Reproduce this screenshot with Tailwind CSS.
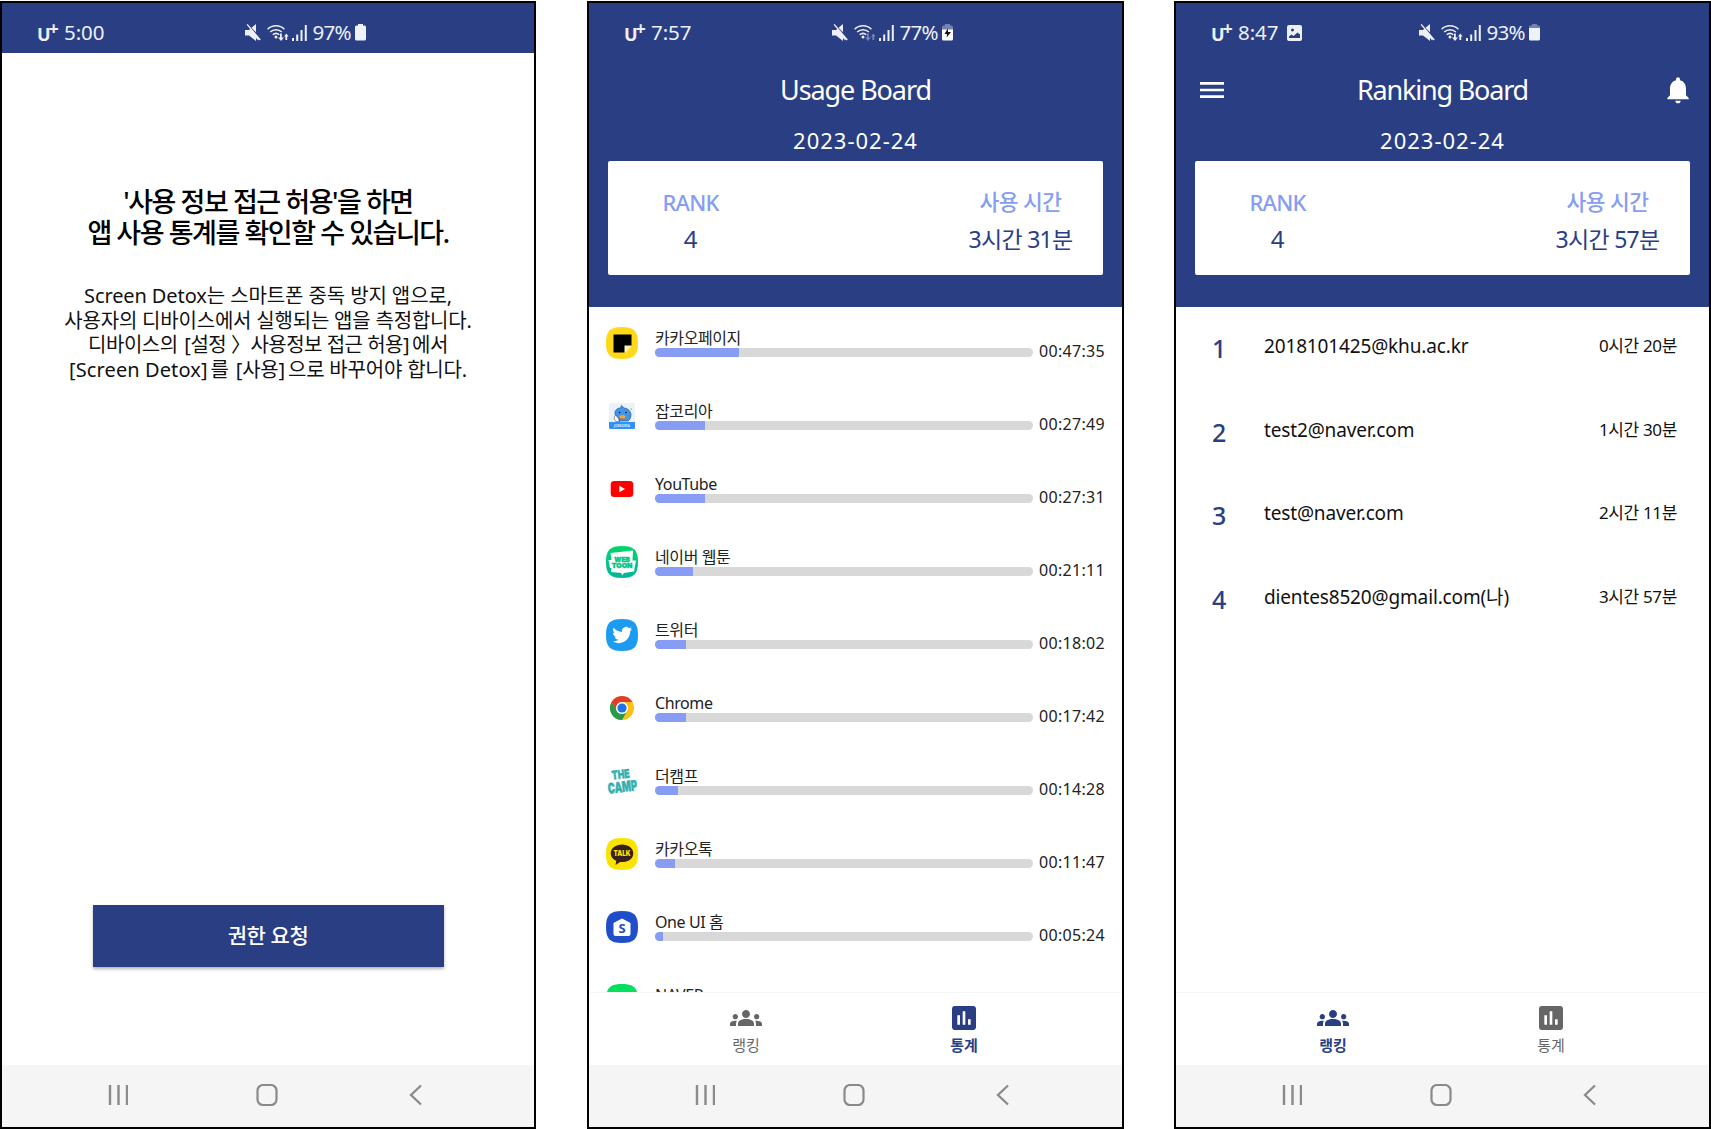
<!DOCTYPE html>
<html lang="ko">
<head>
<meta charset="utf-8">
<title>Screen Detox</title>
<script src="https://cdn.jsdelivr.net/npm/@tailwindcss/browser@4"></script>
</head>
<body class="w-[1711px] h-[1129px] overflow-hidden bg-white pt-px flex font-['Noto_Sans','Noto_Sans_CJK_KR',sans-serif] text-[#111]">

<svg class="hidden">
  <symbol id="mute" viewBox="0 0 16 17"><path fill="currentColor" d="M0 6h4l1.200-1L14 15.300l-1 1L11 14v3L4 11.500H0zM11 0v8.300L6.500 3.800zM1.600.8 2.700 0 15.800 15.500l-1.100 1z"/></symbol>
  <symbol id="wifi" viewBox="0 0 22 17"><g fill="none" stroke="currentColor" stroke-width="1.500"><path d="M.6 5.200a12 12 0 0 1 16.800 0M3.200 8a8.400 8.400 0 0 1 11.600 0M5.700 10.800a5 5 0 0 1 6.600 0"/></g><circle cx="9" cy="13" r="1.500" fill="currentColor"/></symbol>
  <symbol id="arrows" viewBox="0 0 22 17"><path fill="currentColor" d="M13 9.500h1.800v4H17L14 17l-3-3.500h2zM18.400 16v-3.500H17L19.300 9.500 21.600 12.500h-1.400V16z"/></symbol>
  <symbol id="signal" viewBox="0 0 15 16"><path fill="currentColor" d="M0 13h2v3H0zM4.200 9.500h2V16h-2zM8.500 5h2v11h-2zM12.800 0h2v16h-2z"/></symbol>
  <symbol id="groups" viewBox="0 0 24 24"><path fill="currentColor" d="M12 12.750c1.630 0 3.070.39 4.240.9 1.080.48 1.760 1.560 1.760 2.730V18H6v-1.610c0-1.180.68-2.260 1.760-2.730 1.170-.52 2.610-.91 4.240-.91zM4 13c1.100 0 2-.9 2-2s-.9-2-2-2-2 .9-2 2 .9 2 2 2zm1.130 1.100c-.37-.06-.74-.1-1.130-.1-.99 0-1.930.21-2.780.58C.48 14.900 0 15.620 0 16.430V18h4.500v-1.610c0-.83.23-1.610.63-2.290zM20 13c1.100 0 2-.9 2-2s-.9-2-2-2-2 .9-2 2 .9 2 2 2zm4 3.430c0-.81-.48-1.530-1.220-1.850-.85-.37-1.790-.58-2.780-.58-.39 0-.76.04-1.130.1.400.68.63 1.460.63 2.290V18H24v-1.570zM12 6c1.660 0 3 1.340 3 3s-1.340 3-3 3-3-1.340-3-3 1.340-3 3-3z"/></symbol>
  <symbol id="stats" viewBox="0 0 24 24"><path fill="currentColor" d="M19 3H5c-1.100 0-2 .9-2 2v14c0 1.100.9 2 2 2h14c1.100 0 2-.9 2-2V5c0-1.100-.9-2-2-2zM9 17H7v-7h2v7zm4 0h-2V7h2v10zm4 0h-2v-4h2v4z"/></symbol>
  <symbol id="squircle" viewBox="0 0 32 32"><path fill="currentColor" d="M16 0C28 0 32 4 32 16S28 32 16 32 0 28 0 16 4 0 16 0Z"/></symbol>
</svg>

<!-- Permission screen -->
<section class="w-[536px] h-[1128px] shrink-0 border-2 border-black flex flex-col bg-white">
  <div class="h-[50px] bg-[#2a3e84]" data-status="5:00|97%|full"></div>
  <div class="flex-1 flex flex-col items-center">
    <h1 class="mt-[133px] text-center font-medium text-[27px] leading-[31px] tracking-[-1.450px] text-black whitespace-nowrap">'사용 정보 접근 허용'을 하면<br>앱 사용 통계를 확인할 수 있습니다.</h1>
    <p class="mt-[36px] text-center text-[20px] leading-[24.700px] whitespace-nowrap"><span class="tracking-[-0.1px]">Screen Detox는 스마트폰 중독 방지 앱으로,</span><br><span class="tracking-[-0.2px]">사용자의 디바이스에서 실행되는 앱을 측정합니다.</span><br><span class="tracking-[-0.5px]">디바이스의 <span class="ml-[2px]">[설정 〉사용정보 접근 허용]</span><span class="ml-[3px]">에서</span></span><br><span class="tracking-[-0.2px]"><span class="tracking-[0.1px]">[Screen Detox]</span><span class="ml-[3px]">를</span> <span class="ml-[2px]">[사용]</span><span class="ml-[3px]">으로</span> 바꾸어야 합니다.</span></p>
    <button class="mt-auto mb-[98px] w-[351px] h-[62px] bg-[#2a3e84] text-white text-[21px] font-medium tracking-[-0.4px] shadow-[0_2px_3px_rgba(0,0,0,.3)]">권한 요청</button>
  </div>
  <div class="h-[62px] bg-[#f5f5f5]" data-sysnav></div>
</section>

<!-- Usage board -->
<section class="ml-[51px] w-[537px] h-[1128px] shrink-0 border-2 border-black flex flex-col bg-white">
  <header class="h-[304px] bg-[#2a3e84] text-white flex flex-col items-center">
    <div class="h-[50px] w-full" data-status="7:57|77%|charge"></div>
    <h2 class="mt-[17px] text-[27px] leading-[40px] tracking-[-1.100px]">Usage Board</h2>
    <div class="mt-[15px] text-[22px] leading-[30px] tracking-[1px]">2023-02-24</div>
    <div class="mt-[6px] w-[495px] h-[114px] rounded-[2px] bg-white flex justify-between pt-[24px]" data-card="3시간 31분"></div>
  </header>
  <ul id="usage" class="h-[685px] overflow-hidden"></ul>
  <div class="h-[73px] border-t border-[#f7f7f7]" data-tabs="1"></div>
  <div class="h-[62px] bg-[#f5f5f5]" data-sysnav></div>
</section>

<!-- Ranking board -->
<section class="ml-[50px] w-[537px] h-[1128px] shrink-0 border-2 border-black flex flex-col bg-white">
  <header class="h-[304px] bg-[#2a3e84] text-white flex flex-col items-center">
    <div class="h-[50px] w-full" data-status="8:47|93%|high|photo"></div>
    <div class="mt-[17px] w-full h-[40px] px-[15px] grid grid-cols-[1fr_auto_1fr] items-center">
      <svg class="size-8 ml-[5px]" viewBox="0 0 24 24"><path fill="#fff" d="M3 18h18v-2H3v2zm0-5h18v-2H3v2zm0-7v2h18V6H3z"/></svg>
      <h2 class="text-[27px] leading-[40px] tracking-[-1.200px]">Ranking Board</h2>
      <svg class="size-8 justify-self-end" viewBox="0 0 24 24"><path fill="#fff" d="M12 22c1.100 0 2-.9 2-2h-4c0 1.100.89 2 2 2zm6-6v-5c0-3.070-1.640-5.640-4.500-6.320V4c0-.83-.67-1.500-1.500-1.500s-1.500.67-1.500 1.500v.68C7.630 5.360 6 7.920 6 11v5l-2 2v1h16v-1l-2-2z"/></svg>
    </div>
    <div class="mt-[15px] text-[22px] leading-[30px] tracking-[1px]">2023-02-24</div>
    <div class="mt-[6px] w-[495px] h-[114px] rounded-[2px] bg-white flex justify-between pt-[24px]" data-card="3시간 57분"></div>
  </header>
  <ol id="ranking" class="h-[685px]"></ol>
  <div class="h-[73px] border-t border-[#f7f7f7]" data-tabs="0"></div>
  <div class="h-[62px] bg-[#f5f5f5]" data-sysnav></div>
</section>

<script>
const all = (s, f) => document.querySelectorAll(s).forEach(f);

const battery = {
  full: `<path fill="#f0f2fa" d="M3 0h5v1.500h1.500Q11 1.500 11 3v12q0 1.500-1.500 1.500h-8Q0 16.500 0 15V3Q0 1.500 1.500 1.500H3z"/>`,
  high: `<path fill="#7482b3" d="M3 0h5v1.500h1.500Q11 1.500 11 3v2H0V3Q0 1.500 1.500 1.500H3z"/><path fill="#f0f2fa" d="M0 4h11v11q0 1.500-1.500 1.500h-8Q0 16.500 0 15z"/>`,
  charge: `<path fill="#7482b3" d="M3 0h5v1.500h1.500Q11 1.500 11 3v3H0V3Q0 1.500 1.500 1.500H3z"/><path fill="#fff" d="M0 5.500h11V15q0 1.500-1.500 1.500h-8Q0 16.500 0 15z"/><path fill="#111" d="M5.800 4.500 6 8h3L4.600 13.500 5 10H2.500z"/>`
};

all('[data-status]', el => {
  const [time, pct, bat, photo] = el.dataset.status.split('|');
  el.innerHTML = `
  <div class="h-full pl-[35px] pt-[12px] pb-[3px] flex text-[#eef0f8] leading-[35px] text-[20.500px]">
    <div class="w-[27px] flex"><span class="text-[18px] font-bold leading-[38px]">U</span><span class="text-[18px] font-bold leading-[27px] -ml-[2px]">+</span></div>
    <div class="w-[180.500px] flex items-center tracking-[-0.1px]"><span>${time}</span>${photo ? `<svg class="ml-[9px] w-[15px] h-[16px]" viewBox="0 0 15 16"><path fill="currentColor" fill-rule="evenodd" d="M2 0h11q2 0 2 2v12q0 2-2 2H2q-2 0-2-2V2q0-2 2-2zm0 13h11V9.500L10.500 7.500 6.500 11 4.500 9.500 2 11.500zM5.500 3.500a1.500 1.500 0 1 0 .01 0z"/></svg>` : ''}</div>
    <div class="flex items-center">
      <svg class="w-4 h-[17px]"><use href="#mute"/></svg>
      <svg class="ml-[6px] w-[22px] h-[17px]" viewBox="0 0 22 17"><use href="#wifi"/><use href="#arrows" opacity="${bat === 'charge' ? .4 : 1}"/></svg>
      <svg class="ml-[3px] w-[15px] h-4"><use href="#signal"/></svg>
      <span class="ml-[6px] w-[40px] tracking-[-0.700px]">${pct}</span>
      <svg class="ml-[2px] w-[11px] h-[17px]" viewBox="0 0 11 17">${battery[bat]}</svg>
    </div>
  </div>`;
});

all('[data-sysnav]', el => el.innerHTML = `
  <div class="h-full pb-[3px] flex items-center text-[#8a8a8a]">
    <svg class="ml-[106px] w-[20px] h-[22px]" viewBox="0 0 20 22" fill="none" stroke="currentColor" stroke-width="2.400"><path d="M2 1v20M10.500 1v20M19 1v20"/></svg>
    <svg class="ml-[128px] w-[22px] h-[22px]" viewBox="0 0 22 22" fill="none" stroke="currentColor" stroke-width="2.200"><rect x="1.500" y="1" width="19" height="20" rx="5.500"/></svg>
    <svg class="ml-[131px] w-[13px] h-[22px]" viewBox="0 0 13 22" fill="none" stroke="currentColor" stroke-width="2.300"><path d="M12 1.500 2 11l10 9.500"/></svg>
  </div>`);

all('[data-card]', el => el.innerHTML = `
  <div class="w-[165px] flex flex-col items-center">
    <div class="text-[22px] leading-[34px] font-medium tracking-[-0.800px] text-[#859df2]">RANK</div>
    <div class="mt-[2px] text-[24px] leading-[36px] text-[#2a3e84]">4</div>
  </div>
  <div class="w-[165px] flex flex-col items-center whitespace-nowrap">
    <div class="text-[21.500px] leading-[34px] font-medium tracking-[-0.500px] text-[#859df2]">사용 시간</div>
    <div class="mt-[2px] text-[23px] leading-[36px] tracking-[-0.700px] text-[#2a3e84]">${el.dataset.card}</div>
  </div>`);

all('[data-tabs]', el => {
  const tab = (i, icon, label) => `
    <div class="w-[218px] flex flex-col items-center ${+el.dataset.tabs === i ? 'text-[#2a3e84] font-bold' : 'text-[#666]'}">
      <svg class="size-8"><use href="#${icon}"/></svg>
      <div class="text-[15px] leading-[22px] tracking-[-0.1px]">${label}</div>
    </div>`;
  el.innerHTML = `<div class="h-full pl-[48px] pt-[9px] flex">${tab(0, 'groups', '랭킹')}${tab(1, 'stats', '통계')}</div>`;
});

const bg = c => `<use href="#squircle" color="${c}"/>`;
const apps = [
  ['카카오페이지', '00:47:35', 83.5, bg('#ffd918') + `<path d="M7.500 7.500h18v11l-7 7h-11z"/><path fill="#fff3b8" d="M25.500 18.500v1l-6 6h-1v-7z"/>`],
  ['잡코리아', '00:27:49', 49.5, `<rect x="3" y="3" width="26" height="26" rx="1.500" fill="#e9f1fd"/><path fill="#fff" stroke="#334" stroke-width=".5" d="M10 21.500c-3-2-2-7 1.500-7.500l2 7.500z"/><path fill="#3d97f0" stroke="#246" stroke-width=".6" d="M9 14c-.5-4 2.500-6 5.500-6l1-2.500L18 8c4.500.5 7 3.500 7 7 0 3-1.500 5-3 6H13c1.500-3-3-4-4-7z"/><path fill="#f6a63a" stroke="#a60" stroke-width=".3" d="M13 16q3.500-2.500 7 0l-1 2.500h-5z"/><circle cx="13.500" cy="12.500" r=".8"/><circle cx="20" cy="12.500" r=".8"/><path fill="#f8c84a" d="M24.500 8h1.500v2h-1.500z"/><path fill="#3490f7" d="M3 22h26v5.500q0 1.500-1.500 1.500h-23Q3 29 3 27.500z"/><text x="8" y="27" font-size="4" font-weight="700" textLength="16" lengthAdjust="spacingAndGlyphs" fill="#d5e8ff">JOBKOREA</text>`],
  ['YouTube', '00:27:31', 49.5, `<rect x="4.700" y="8" width="22.600" height="16" rx="3.500" fill="#f00"/><path fill="#fff" d="M13.300 12.700v6.600l5.700-3.300z"/>`],
  ['네이버 웹툰', '00:21:11', 38, `<defs><linearGradient id="wt" x1="0" y1="0" x2="0" y2="1"><stop stop-color="#00d66b"/><stop offset="1" stop-color="#00b59b"/></linearGradient></defs><path fill="url(#wt)" d="M16 0C28 0 32 4 32 16S28 32 16 32 0 28 0 16 4 0 16 0Z"/><path fill="#fff" d="M4.500 7 27 4.500l-.5 10H30l-2 11-10 1.500-2 2.500-.5-2.500L5 26l.5-4H4L2.500 14h3z"/><g fill="#00c583" stroke="#00c583" stroke-width=".4" font-weight="900" font-family="Inter" font-size="6.600"><text x="8.300" y="15.700" textLength="15.500" lengthAdjust="spacingAndGlyphs">WEB</text><text x="5.800" y="22.200" textLength="20.500" lengthAdjust="spacingAndGlyphs">TOON</text></g>`],
  ['트위터', '00:18:02', 31, bg('#1d9bf0') + `<g transform="translate(6.300 6.100) scale(.83)"><path fill="#fff" d="M23.953 4.570a10 10 0 01-2.825.775 4.958 4.958 0 002.163-2.723c-.951.555-2.005.959-3.127 1.184a4.920 4.920 0 00-8.384 4.482C7.690 8.095 4.067 6.130 1.640 3.162a4.822 4.822 0 00-.666 2.475c0 1.710.870 3.213 2.188 4.096a4.904 4.904 0 01-2.228-.616v.06a4.923 4.923 0 003.946 4.827 4.996 4.996 0 01-2.212.085 4.936 4.936 0 004.604 3.417 9.867 9.867 0 01-6.102 2.105c-.390 0-.779-.023-1.170-.067a13.995 13.995 0 007.557 2.209c9.053 0 13.998-7.496 13.998-13.985 0-.210 0-.420-.015-.630A9.935 9.935 0 0024 4.590z"/></g>`],
  ['Chrome', '00:17:42', 31, `<circle cx="16" cy="16" r="12" fill="#fbc116"/><path fill="#e33b2e" d="M5.600 10A12 12 0 0 1 26.400 10H16a6 6 0 0 0-5.200 9z"/><path fill="#249a4b" d="M5.600 10 10.800 19A6 6 0 0 0 21.200 19L16 28A12 12 0 0 1 5.600 10z"/><circle cx="16" cy="16" r="6" fill="#fff"/><circle cx="16" cy="16" r="4.600" fill="#1a73e8"/>`],
  ['더캠프', '00:14:28', 23, `<g fill="#35b0b0" stroke="#35b0b0" stroke-width=".5" font-family="Inter" font-weight="900" transform="rotate(-7 16 16)"><text x="6.500" y="13.500" font-size="12" textLength="18" lengthAdjust="spacingAndGlyphs">THE</text><text x="1" y="27" font-size="14.500" textLength="29.500" lengthAdjust="spacingAndGlyphs">CAMP</text></g>`],
  ['카카오톡', '00:11:47', 19.5, bg('#fbe300') + `<path fill="#3b1e1e" d="M16 6.500c6.300 0 11.300 3.800 11.300 8.900S22.300 24 16 24l-1.800-.1L9.500 27l.7-4.200C6.800 21.300 4.700 18.500 4.700 15.400c0-5.100 5-8.900 11.300-8.900z"/><text x="7.500" y="18" font-size="7.500" font-weight="900" font-family="Inter" fill="#fbe300" textLength="17" lengthAdjust="spacingAndGlyphs">TALK</text>`],
  ['One UI 홈', '00:05:24', 8, bg('#1f4ec8') + `<path fill="#fff" d="M16 7.500 24.500 12v11q0 2-2 2h-13q-2 0-2-2V12z"/><text x="16" y="21.500" text-anchor="middle" font-size="13" font-weight="700" fill="#1f4ec8">S</text>`],
  ['NAVER', '', 0, bg('#03e05f')]
];
document.getElementById('usage').innerHTML = apps.map(([name, time, fill, icon]) => `
  <li class="h-[73px] pl-[17px] pt-[20px] flex">
    <svg class="size-8 shrink-0" viewBox="0 0 32 32">${icon}</svg>
    <div class="ml-[17px] w-[378px]">
      <div class="h-[21px] leading-[23px] text-[16px] tracking-[-0.400px] text-[#222]">${name}</div>
      <div class="h-[9px] rounded-full bg-[#d8d8d8] overflow-hidden"><div class="h-full bg-[#869df3]" style="width:${fill}px"></div></div>
    </div>
    <div class="ml-[6px] pt-[12px] leading-[24px] text-[16px] tracking-[0.300px] text-[#222]">${time}</div>
  </li>`).join('');

const ranks = [
  ['2018101425@khu.ac.kr', '0시간 20분'],
  ['test2@naver.com', '1시간 30분'],
  ['test@naver.com', '2시간 11분'],
  ['dientes8520@gmail.com(나)', '3시간 57분']
];
document.getElementById('ranking').innerHTML = ranks.map(([mail, time], i) => `
  <li class="h-[83.500px] pl-[36px] pr-[32px] pt-[21px] flex leading-[36px] whitespace-nowrap">
    <div class="w-[52px] pt-[2px] text-[25px] font-medium text-[#2a3e84]">${i + 1}</div>
    <div class="flex-1 text-[19px] tracking-[-0.150px]">${mail}</div>
    <div class="text-[17px] tracking-[-0.350px]">${time}</div>
  </li>`).join('');
</script>
</body>
</html>
